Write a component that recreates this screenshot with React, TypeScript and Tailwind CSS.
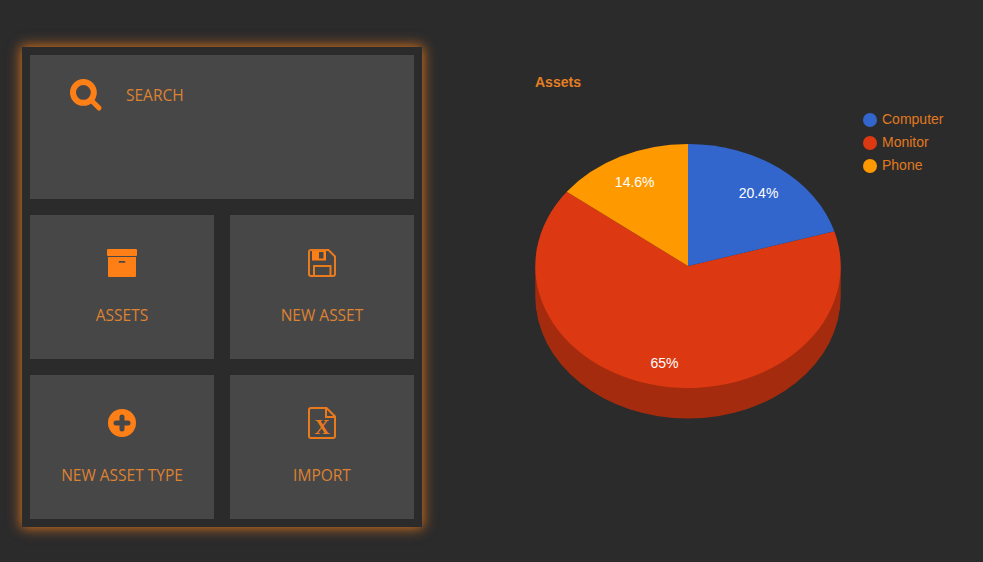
import type { ReactNode } from "react";

const tileBg = "#484748";
const orange = "#ff7f17";
const outline = "#ea7b1c";

function SearchIcon() {
  return (
    <svg width="33" height="33" viewBox="0 0 33 33" fill="none" stroke={orange}>
      <circle cx="13.4" cy="13.4" r="10.4" strokeWidth="6" />
      <line x1="22" y1="22" x2="29" y2="29" strokeWidth="5" strokeLinecap="round" />
    </svg>
  );
}

function ArchiveIcon() {
  return (
    <svg width="30" height="28" viewBox="0 0 30 28" fill={orange}>
      <rect x="0" y="0" width="30" height="7" rx="1" />
      <path d="M1 8h28v19a1 1 0 0 1-1 1H2a1 1 0 0 1-1-1zM12.5 12a.9.9 0 0 0 0 1.8h5a.9.9 0 0 0 0-1.8z" fillRule="evenodd" />
    </svg>
  );
}

function SaveIcon() {
  return (
    <svg width="28" height="28" viewBox="0 0 28 28" fill="none" stroke={outline}>
      <path d="M3 1h17.5L27 7.5V25a2 2 0 0 1-2 2H3a2 2 0 0 1-2-2V3a2 2 0 0 1 2-2z" strokeWidth="2" />
      <path d="M4 2h14v9.5H4z M11 3v6.5h4.5V3z" fill={orange} fillRule="evenodd" stroke="none" />
      <rect x="6" y="17" width="16.5" height="10" strokeWidth="2" />
    </svg>
  );
}

function PlusIcon() {
  return (
    <svg width="28" height="28" viewBox="0 0 28 28">
      <circle cx="14" cy="14" r="14" fill={orange} />
      <path d="M8 14h12M14 8v12" stroke={tileBg} strokeWidth="5" strokeLinecap="round" />
    </svg>
  );
}

function FileXIcon() {
  return (
    <svg width="28" height="32" viewBox="0 0 28 32" fill="none" stroke={outline}>
      <path d="M3 1h15.5L27 9.5V29a2 2 0 0 1-2 2H3a2 2 0 0 1-2-2V3a2 2 0 0 1 2-2z" strokeWidth="2" />
      <path d="M18 1v9h9" strokeWidth="2" />
      <text x="14" y="27" textAnchor="middle" fill={outline} stroke="none" fontSize="21" fontWeight="700" fontFamily="'Liberation Serif', serif">
        X
      </text>
    </svg>
  );
}

function Tile({ icon, label }: { icon: ReactNode; label: string }) {
  return (
    <div className="h-[144px] bg-[#484748] flex flex-col items-center">
      <div className="h-[32px] mt-[32px] flex items-center justify-center">{icon}</div>
      <div className="mt-[24px] text-[15.5px] leading-[24px] text-[#dd8230]">{label}</div>
    </div>
  );
}

// top face of the pie, angles measured clockwise from 12 o'clock
const cx = 153;
const cy = 122;
const rx = 152.7;
const ry = 122;
const depth = 30.5;

function point(pct: number) {
  const a = (pct / 100) * Math.PI * 2;
  return `${(cx + rx * Math.sin(a)).toFixed(2)} ${(cy - ry * Math.cos(a)).toFixed(2)}`;
}

function slice(from: number, to: number) {
  const large = to - from > 50 ? 1 : 0;
  return `M${cx} ${cy}L${point(from)}A${rx} ${ry} 0 ${large} 1 ${point(to)}Z`;
}

function PieChart() {
  return (
    <svg width="306" height="278" viewBox="0 0 306 278" className="block">
      <path
        d={`M${cx - rx} ${cy}V${cy + depth}A${rx} ${ry} 0 0 0 ${cx + rx} ${cy + depth}V${cy}Z`}
        fill="#a52b0e"
      />
      <path d={slice(20.4, 85.4)} fill="#dc3912" />
      <path d={slice(0, 20.4)} fill="#3366cc" />
      <path d={slice(85.4, 100)} fill="#ff9900" />
      <g fill="#fff" fontSize="14" textAnchor="middle" fontFamily="'Liberation Sans', Arial, sans-serif">
        <text x="223.5" y="54">20.4%</text>
        <text x="99.7" y="43">14.6%</text>
        <text x="129.5" y="224">65%</text>
      </g>
    </svg>
  );
}

const legend = [
  { name: "Computer", color: "bg-[#3366cc]" },
  { name: "Monitor", color: "bg-[#dc3912]" },
  { name: "Phone", color: "bg-[#ff9900]" },
];

export default function App() {
  return (
    <div className="h-screen overflow-hidden bg-[#2b2b2c] flex items-start pt-[47px] pl-[22px] font-['Open_Sans',sans-serif]">
      {/* Menu panel */}
      <div className="w-[400px] h-[480px] shrink-0 p-2 grid grid-cols-2 gap-4 content-start bg-[#2b2b2c] shadow-[0_0_12px_1px_#d9731c]">
        <div className="col-span-2 h-[144px] bg-[#484748] flex items-start pl-[40px] pt-[24px]">
          <SearchIcon />
          <span className="ml-[23px] mt-[4px] text-[15.5px] leading-[24px] text-[#dd8230]">SEARCH</span>
        </div>
        <Tile icon={<ArchiveIcon />} label="ASSETS" />
        <Tile icon={<SaveIcon />} label="NEW ASSET" />
        <Tile icon={<PlusIcon />} label="NEW ASSET TYPE" />
        <Tile icon={<FileXIcon />} label="IMPORT" />
      </div>

      {/* Chart */}
      <div className="ml-[113px] w-[306px] shrink-0 mt-[26px] font-['Liberation_Sans',Arial,sans-serif]">
        <div className="h-[18px] leading-[18px] text-[14px] font-bold text-[#e67f22]">Assets</div>
        <div className="mt-[53px]">
          <PieChart />
        </div>
      </div>

      {/* Legend */}
      <div className="ml-[22px] mt-[61px] font-['Liberation_Sans',Arial,sans-serif]">
        {legend.map((item) => (
          <div key={item.name} className="h-[23px] flex items-center gap-[5px]">
            <span className={`w-[14px] h-[14px] rounded-full ${item.color}`} />
            <span className="text-[14px] text-[#e0791f]">{item.name}</span>
          </div>
        ))}
      </div>
    </div>
  );
}
